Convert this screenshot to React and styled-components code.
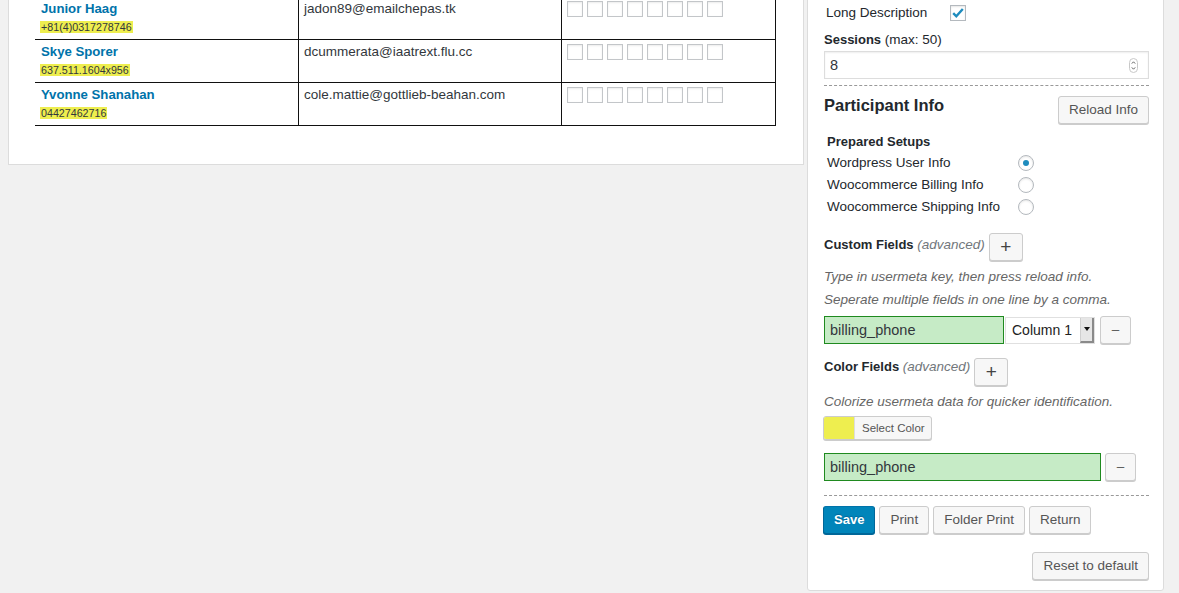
import React from "react";
import styled, { createGlobalStyle, css } from "styled-components";

const GlobalStyle = createGlobalStyle`
  html, body { margin: 0; padding: 0; background: #f1f1f1; overflow: hidden; }
  body { font-family: "Liberation Sans", Arial, sans-serif; font-size: 13.5px; color: #23282d; }
  * { box-sizing: border-box; }
`;

const Page = styled.div`
  display: flex;
  align-items: flex-start;
  gap: 3px;
  padding-left: 8px;
  margin-top: -20px;
`;

const Card = styled.div`
  background: #fff;
  border: 1px solid #dcdcdc;
`;

const LeftCard = styled(Card)`
  width: 796px;
  padding: 16px 0 38px 26px;
`;

const RightCard = styled(Card)`
  width: 357px;
  padding: 24px 14px 10px 16px;
  border-radius: 0 0 3px 3px;
`;

/* ---------- table ---------- */
const Table = styled.div`
  display: grid;
  grid-template-columns: 264px 263px 214px;
  width: 741px;
`;

const Cell = styled.div`
  height: 43px;
  border-right: 1px solid #111;
  border-bottom: 1px solid #111;
  padding: 3px 5px 0 ${(p) => (p.$first ? 6 : 5)}px;
`;

const Name = styled.a`
  display: block;
  font-weight: 700;
  font-size: 13.2px;
  line-height: 18px;
  color: #0073aa;
  text-decoration: none;
`;

const Phone = styled.span`
  display: inline-block;
  margin: 3px 0 0 -1px;
  padding: 0 1px;
  background: #eeee4f;
  font-size: 10.7px;
  line-height: 12px;
  color: #32373c;
`;

const Email = styled.div`
  font-size: 13.5px;
  line-height: 18px;
  color: #32373c;
`;

const Boxes = styled.div`
  display: flex;
  gap: 4px;
  padding-top: 1px;
`;

const TinyBox = styled.span`
  width: 16px;
  height: 16px;
  border: 1px solid #c3c6c9;
  background: #fff;
  box-shadow: inset 0 1px 2px rgba(0, 0, 0, 0.08);
`;

/* ---------- right panel ---------- */
const OptionRow = styled.div`
  display: flex;
  align-items: center;
  height: 16px;
  padding-left: 2px;
`;

const OptionLabel = styled.span`
  width: ${(p) => p.$w}px;
  font-size: 13.5px;
  line-height: 18px;
`;

const CheckBox = styled.span`
  width: 16px;
  height: 16px;
  border: 1px solid #b4b9be;
  background: #fff;
  box-shadow: inset 0 1px 2px rgba(0, 0, 0, 0.1);
  display: flex;
  align-items: center;
  justify-content: center;
`;

const FieldLabel = styled.div`
  margin-top: ${(p) => p.$mt || 0}px;
  padding-left: ${(p) => p.$pl || 0}px;
  font-weight: 700;
  font-size: 13px;
  line-height: 18px;
  color: #23282d;
`;

const Normal = styled.span`
  font-weight: 400;
  font-size: 13.5px;
`;

const Adv = styled.span`
  font-weight: 400;
  font-style: italic;
  font-size: 13.5px;
  color: #72777c;
`;

const NumberBox = styled.div`
  margin-top: 2px;
  height: 28px;
  border: 1px solid #ddd;
  box-shadow: inset 0 1px 2px rgba(0, 0, 0, 0.07);
  display: flex;
  align-items: center;
  justify-content: space-between;
  padding: 0 10px 0 5px;
  font-size: 14.5px;
  color: #32373c;
`;

const Dashed = styled.hr`
  border: 0;
  border-top: 1px dashed #999;
  height: 0;
  margin: ${(p) => p.$mt}px 0 0;
`;

const HeaderRow = styled.div`
  display: flex;
  justify-content: space-between;
  align-items: flex-start;
  margin-top: 10px;
`;

const Title = styled.h3`
  margin: -1px 0 0;
  font-size: 16.5px;
  line-height: 20px;
  font-weight: 700;
  color: #23282d;
`;

const Button = styled.button`
  height: 28px;
  padding: 0 10px 1px;
  border: 1px solid #ccc;
  border-radius: 3px;
  background: #f7f7f7;
  box-shadow: 0 1px 0 #ccc;
  color: #555;
  font-family: "Liberation Sans", Arial, sans-serif;
  font-size: 13.5px;
  line-height: 26px;
  white-space: nowrap;
  cursor: pointer;
  ${(p) =>
    p.$square &&
    css`
      width: ${p.$square}px;
      padding: 0;
    `}
  ${(p) =>
    p.$plus &&
    css`
      font-size: 19px;
      color: #444;
    `}
  ${(p) =>
    p.$primary &&
    css`
      background: #0085ba;
      border-color: #0073aa #006799 #006799;
      box-shadow: 0 1px 0 #006799;
      color: #fff;
      font-weight: 700;
      font-size: 13px;
      text-shadow: 0 -1px 1px #006799;
    `}
`;

const RadioList = styled.div`
  margin-top: 1px;
`;

const RadioRow = styled.div`
  display: flex;
  align-items: center;
  height: 22px;
  padding-left: 3px;
`;

const Radio = styled.span`
  width: 16px;
  height: 16px;
  border-radius: 50%;
  border: 1px solid #b4b9be;
  background: #fff;
  box-shadow: inset 0 1px 2px rgba(0, 0, 0, 0.1);
  display: flex;
  align-items: center;
  justify-content: center;
  &::after {
    content: "";
    width: 6px;
    height: 6px;
    border-radius: 50%;
    background: ${(p) => (p.$on ? "#1e8cbe" : "transparent")};
  }
`;

const AdvRow = styled.div`
  display: flex;
  align-items: flex-start;
  gap: 4px;
  margin-top: ${(p) => p.$mt}px;
`;

const AdvLabel = styled(FieldLabel)`
  margin-top: ${(p) => p.$top}px;
`;

const Desc = styled.p`
  margin: ${(p) => p.$mt}px 0 0;
  font-style: italic;
  font-size: 13.5px;
  line-height: 18px;
  color: #666;
`;

const InputRow = styled.div`
  display: flex;
  align-items: center;
  margin-top: ${(p) => p.$mt}px;
`;

const GreenInput = styled.div`
  width: ${(p) => p.$w}px;
  height: 28px;
  background: #c6ebc6;
  border: 1px solid #1f8a1f;
  padding-left: 5px;
  display: flex;
  align-items: center;
  font-size: 14.5px;
  color: #32373c;
`;

const SelectBox = styled.div`
  margin-left: 1px;
  width: 90px;
  height: 27px;
  display: flex;
  border: 1px solid #e0e0e0;
  background: #fff;
`;

const SelectText = styled.span`
  flex: 1;
  padding-left: 6px;
  font-size: 14px;
  line-height: 25px;
  color: #222;
`;

const SelectArrow = styled.span`
  width: 14px;
  background: #e6e6e6;
  border-left: 1px solid #cfcfcf;
  border-right: 2px solid #8a8a8a;
  border-bottom: 2px solid #8a8a8a;
  display: flex;
  align-items: center;
  justify-content: center;
  &::after {
    content: "";
    border-left: 3px solid transparent;
    border-right: 3px solid transparent;
    border-top: 4px solid #111;
  }
`;

const Gap = styled.span`
  width: ${(p) => p.$w}px;
  flex: none;
`;

const ColorButton = styled.div`
  margin: 5px 0 0 -1px;
  display: inline-flex;
  height: 24px;
  border: 1px solid #ccc;
  border-radius: 3px;
  box-shadow: 0 1px 0 #ccc;
  overflow: hidden;
  background: #f7f7f7;
`;

const Swatch = styled.span`
  width: 31px;
  background: #eeee4f;
  border-right: 1px solid #ddd;
`;

const ColorText = styled.span`
  padding: 0 6px 0 7px;
  font-size: 11.5px;
  line-height: 22px;
  color: #555;
`;

const ButtonRow = styled.div`
  display: flex;
  gap: 4px;
  margin: 10px 0 0 -1px;
`;

const ResetRow = styled.div`
  display: flex;
  justify-content: flex-end;
  margin-top: 18px;
`;

const rows = [
  { name: "Junior Haag", phone: "+81(4)0317278746", email: "jadon89@emailchepas.tk" },
  { name: "Skye Sporer", phone: "637.511.1604x956", email: "dcummerata@iaatrext.flu.cc" },
  { name: "Yvonne Shanahan", phone: "04427462716", email: "cole.mattie@gottlieb-beahan.com" },
];

const Spinner = () => (
  <svg width="9" height="15" viewBox="0 0 9 15">
    <rect x="0.5" y="0.5" width="8" height="14" rx="4" fill="#fff" stroke="#c8c8c8" />
    <path d="M2.8 5.6 L4.5 3.8 L6.2 5.6" fill="none" stroke="#666" strokeWidth="1" />
    <path d="M2.8 9.4 L4.5 11.2 L6.2 9.4" fill="none" stroke="#666" strokeWidth="1" />
  </svg>
);

const Check = () => (
  <svg width="14" height="14" viewBox="0 0 14 14">
    <path d="M2.2 7.2 L5.3 10.3 L11.8 3" fill="none" stroke="#1e8cbe" strokeWidth="2.4" />
  </svg>
);

export default function App() {
  return (
    <>
      <GlobalStyle />
      <Page>
        <LeftCard>
          <Table>
            {rows.map((r) => (
              <React.Fragment key={r.name}>
                <Cell $first>
                  <Name href="#">{r.name}</Name>
                  <Phone>{r.phone}</Phone>
                </Cell>
                <Cell>
                  <Email>{r.email}</Email>
                </Cell>
                <Cell>
                  <Boxes>
                    {Array.from({ length: 8 }).map((_, i) => (
                      <TinyBox key={i} />
                    ))}
                  </Boxes>
                </Cell>
              </React.Fragment>
            ))}
          </Table>
        </LeftCard>

        <RightCard>
          <OptionRow>
            <OptionLabel $w={124}>Long Description</OptionLabel>
            <CheckBox>
              <Check />
            </CheckBox>
          </OptionRow>

          <FieldLabel $mt={10}>
            Sessions <Normal>(max: 50)</Normal>
          </FieldLabel>
          <NumberBox>
            <span>8</span>
            <Spinner />
          </NumberBox>

          <Dashed $mt={6} />

          <HeaderRow>
            <Title>Participant Info</Title>
            <Button>Reload Info</Button>
          </HeaderRow>

          <FieldLabel $mt={9} $pl={3}>
            Prepared Setups
          </FieldLabel>
          <RadioList>
            <RadioRow>
              <OptionLabel $w={191}>Wordpress User Info</OptionLabel>
              <Radio $on />
            </RadioRow>
            <RadioRow>
              <OptionLabel $w={191}>Woocommerce Billing Info</OptionLabel>
              <Radio />
            </RadioRow>
            <RadioRow>
              <OptionLabel $w={191}>Woocommerce Shipping Info</OptionLabel>
              <Radio />
            </RadioRow>
          </RadioList>

          <AdvRow $mt={15}>
            <AdvLabel $top={3}>
              Custom Fields <Adv>(advanced)</Adv>
            </AdvLabel>
            <Button $square={34} $plus>
              +
            </Button>
          </AdvRow>
          <Desc $mt={7}>Type in usermeta key, then press reload info.</Desc>
          <Desc $mt={5}>Seperate multiple fields in one line by a comma.</Desc>

          <InputRow $mt={7}>
            <GreenInput $w={180}>billing_phone</GreenInput>
            <SelectBox>
              <SelectText>Column 1</SelectText>
              <SelectArrow />
            </SelectBox>
            <Gap $w={5} />
            <Button $square={31}>–</Button>
          </InputRow>

          <AdvRow $mt={14}>
            <AdvLabel $top={0}>
              Color Fields <Adv>(advanced)</Adv>
            </AdvLabel>
            <Button $square={34} $plus>
              +
            </Button>
          </AdvRow>
          <Desc $mt={7}>Colorize usermeta data for quicker identification.</Desc>
          <ColorButton>
            <Swatch />
            <ColorText>Select Color</ColorText>
          </ColorButton>

          <InputRow $mt={11}>
            <GreenInput $w={277}>billing_phone</GreenInput>
            <Gap $w={4} />
            <Button $square={31}>–</Button>
          </InputRow>

          <Dashed $mt={14} />

          <ButtonRow>
            <Button $primary>Save</Button>
            <Button>Print</Button>
            <Button>Folder Print</Button>
            <Button>Return</Button>
          </ButtonRow>

          <ResetRow>
            <Button>Reset to default</Button>
          </ResetRow>
        </RightCard>
      </Page>
    </>
  );
}
